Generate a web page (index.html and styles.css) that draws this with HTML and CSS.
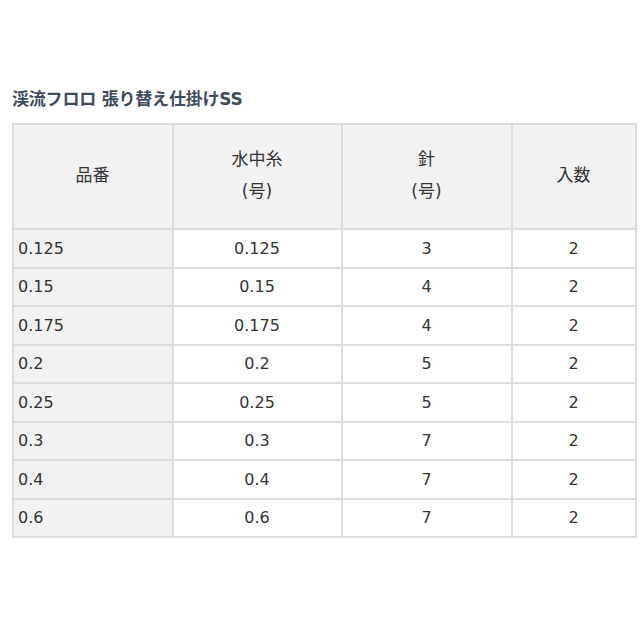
FILE: index.html
```html
<!DOCTYPE html>
<html lang="ja">
<head>
<meta charset="utf-8">
<title>渓流フロロ 張り替え仕掛けSS</title>
<link rel="stylesheet" href="styles.css">
</head>
<body>
<div class="page">
  <h2 class="title">渓流フロロ 張り替え仕掛けSS</h2>
  <table class="spec">
    <colgroup>
      <col class="c1"><col class="c2"><col class="c3"><col class="c4">
    </colgroup>
    <thead>
      <tr class="head">
        <th>品番</th>
        <th>水中糸<br>(号)</th>
        <th>針<br>(号)</th>
        <th>入数</th>
      </tr>
    </thead>
    <tbody>
      <tr><th>0.125</th><td>0.125</td><td>3</td><td>2</td></tr>
      <tr><th>0.15</th><td>0.15</td><td>4</td><td>2</td></tr>
      <tr><th>0.175</th><td>0.175</td><td>4</td><td>2</td></tr>
      <tr><th>0.2</th><td>0.2</td><td>5</td><td>2</td></tr>
      <tr><th>0.25</th><td>0.25</td><td>5</td><td>2</td></tr>
      <tr><th>0.3</th><td>0.3</td><td>7</td><td>2</td></tr>
      <tr><th>0.4</th><td>0.4</td><td>7</td><td>2</td></tr>
      <tr><th>0.6</th><td>0.6</td><td>7</td><td>2</td></tr>
    </tbody>
  </table>
</div>
</body>
</html>
```
FILE: styles.css
```css
html, body {
  margin: 0;
  padding: 0;
  background: #ffffff;
}

.page {
  padding: 89px 0 0 12px;
  font-family: "DejaVu Sans", "Noto Sans CJK JP", sans-serif;
  color: #333333;
}

.title {
  margin: 0 0 13px 0;
  font-family: "DejaVu Sans", "Noto Sans CJK JP", sans-serif;
  font-size: 17px;
  line-height: 21px;
  font-weight: bold;
  color: #3d4b5c;
  letter-spacing: -0.2px;
}

.spec {
  border-collapse: collapse;
  table-layout: fixed;
  width: 623px;
  font-size: 16px;
}

.c1 { width: 160px; }
.c2 { width: 169px; }
.c3 { width: 170px; }
.c4 { width: 124px; }

.spec th,
.spec td {
  border: 2px solid #dcdcdc;
  padding: 0 5px 0 4px;
  font-weight: normal;
  text-align: center;
  vertical-align: middle;
  color: #333333;
}

.spec thead th {
  background: #f2f2f2;
  height: 100px;
  line-height: 32px;
  font-size: 17px;
  padding-bottom: 3px;
}

.spec tbody tr {
  height: 38.5px;
}

.spec tbody th {
  background: #f2f2f2;
  text-align: left;
}

.spec tbody td {
  background: #ffffff;
}
```
